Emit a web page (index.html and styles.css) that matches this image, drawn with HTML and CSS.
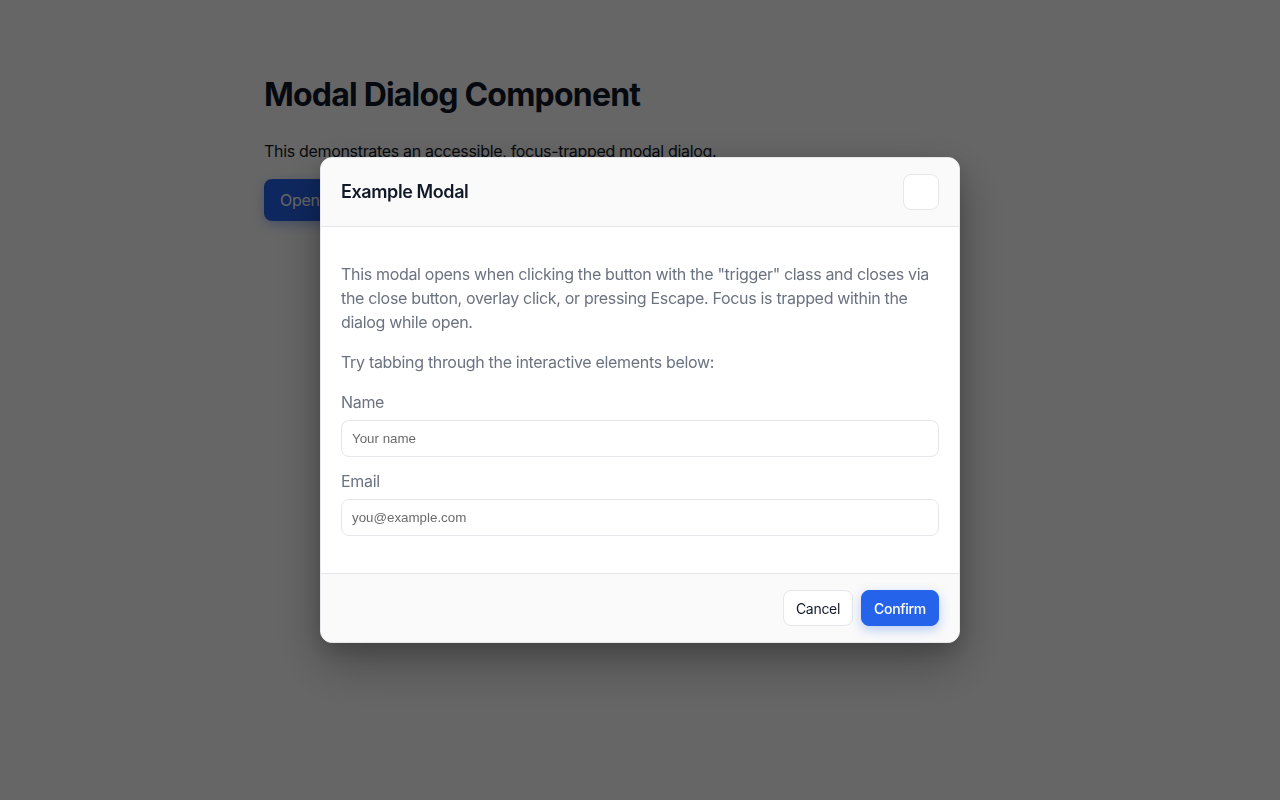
FILE: index.html
```html
<!DOCTYPE html>
<html lang="en">
<head>
<meta charset="utf-8">
<title>Modal Dialog Component</title>
<link rel="stylesheet" href="styles.css">
</head>
<body>
<main class="page">
  <h1 class="page-title">Modal Dialog Component</h1>
  <p class="page-text">This demonstrates an accessible, focus-trapped modal dialog.</p>
  <button class="btn-open trigger" type="button">Open Modal</button>
</main>

<div class="overlay">
  <div class="modal" role="dialog" aria-modal="true" aria-labelledby="modal-title">
    <header class="modal-header">
      <h2 class="modal-title" id="modal-title">Example Modal</h2>
      <button class="modal-close" type="button" aria-label="Close"></button>
    </header>
    <div class="modal-body">
      <p class="modal-text">This modal opens when clicking the button with the "trigger" class and closes via the close button, overlay click, or pressing Escape. Focus is trapped within the dialog while open.</p>
      <p class="modal-text">Try tabbing through the interactive elements below:</p>
      <div class="field">
        <label class="field-label" for="name">Name</label>
        <input class="field-input" id="name" type="text" placeholder="Your name">
      </div>
      <div class="field field-last">
        <label class="field-label" for="email">Email</label>
        <input class="field-input" id="email" type="email" placeholder="you@example.com">
      </div>
    </div>
    <footer class="modal-footer">
      <button class="btn btn-secondary" type="button">Cancel</button>
      <button class="btn btn-primary" type="button">Confirm</button>
    </footer>
  </div>
</div>
</body>
</html>
```

FILE: styles.css
```css
* { box-sizing: border-box; }

html, body {
  margin: 0;
  height: 100%;
}

body {
  font-family: Inter, "Noto Sans", "Liberation Sans", sans-serif;
  background: #ffffff;
  color: #111827;
}

.page {
  max-width: 800px;
  margin: 0 auto;
  padding: 75px 24px 24px;
}

.page-title {
  margin: 0 0 24px;
  font-size: 32px;
  line-height: 40px;
  font-weight: 700;
  letter-spacing: -0.8px;
  color: #111827;
}

.page-text {
  margin: 0 0 16px;
  font-size: 16px;
  line-height: 24px;
  letter-spacing: -0.32px;
  color: #111827;
}

.btn-open {
  height: 42px;
  padding: 0 16px;
  border: none;
  border-radius: 8px;
  background: #2563eb;
  color: #ffffff;
  font-family: inherit;
  font-size: 16px;
  letter-spacing: -0.32px;
  box-shadow: 0 4px 12px rgba(37, 99, 235, 0.35);
}

.overlay {
  position: fixed;
  inset: 0;
  background: rgba(0, 0, 0, 0.6);
  display: flex;
  align-items: center;
  justify-content: center;
}

.modal {
  width: 640px;
  background: #ffffff;
  border: 1px solid #e5e7eb;
  border-radius: 12px;
  overflow: hidden;
  box-shadow: 0 20px 50px rgba(0, 0, 0, 0.3), 0 8px 20px rgba(0, 0, 0, 0.15);
}

.modal-header {
  display: flex;
  align-items: center;
  justify-content: space-between;
  padding: 16px 20px;
  background: #fafafa;
  border-bottom: 1px solid #e5e7eb;
}

.modal-title {
  margin: 0;
  font-size: 18px;
  line-height: 24px;
  font-weight: 600;
  letter-spacing: -0.4px;
  color: #111827;
}

.modal-close {
  width: 36px;
  height: 36px;
  padding: 0;
  border: 1px solid #e5e7eb;
  border-radius: 8px;
  background: #ffffff;
}

.modal-body {
  padding: 20px 20px 21px;
}

.modal-text {
  margin: 16px 0;
  font-size: 16px;
  line-height: 24px;
  letter-spacing: -0.32px;
  color: #6b7280;
}

.modal-text:first-child {
  margin-top: 15px;
}

.field {
  display: flex;
  flex-direction: column;
  gap: 6px;
  margin-bottom: 12px;
}

.field-last {
  margin-bottom: 16px;
}

.field-label {
  font-size: 16px;
  line-height: 24px;
  letter-spacing: -0.32px;
  color: #6b7280;
}

.field-input {
  height: 37px;
  padding: 0 10px;
  border: 1px solid #e5e7eb;
  border-radius: 8px;
  background: #ffffff;
  font-family: "Liberation Sans", Arial, sans-serif;
  font-size: 13.33px;
  color: #111827;
}

.field-input::placeholder {
  color: #6b6b6b;
}

.modal-footer {
  display: flex;
  justify-content: flex-end;
  gap: 8px;
  padding: 16px 20px;
  background: #fafafa;
  border-top: 1px solid #e5e7eb;
}

.btn {
  height: 36px;
  padding: 0 12px;
  border-radius: 8px;
  font-family: inherit;
  font-size: 14px;
  font-weight: 400;
  letter-spacing: -0.3px;
}

.btn-secondary {
  border: 1px solid #e5e7eb;
  background: #ffffff;
  color: #111827;
}

.btn-primary {
  border: 1px solid #2563eb;
  background: #2563eb;
  color: #ffffff;
  font-weight: 500;
  box-shadow: 0 4px 12px rgba(37, 99, 235, 0.3);
}
```
